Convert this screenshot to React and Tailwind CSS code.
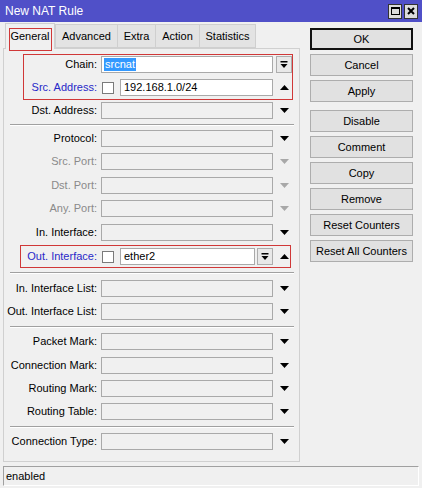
import React from "react";

const Down = ({ gray }) => (
  <svg width="9" height="5" viewBox="0 0 9 5">
    <polygon points="0,0 9,0 4.5,5" fill={gray ? "#a8a8a8" : "#000"} />
  </svg>
);
const Up = () => (
  <svg width="9" height="5" viewBox="0 0 9 5">
    <polygon points="0,5 9,5 4.5,0" fill="#000" />
  </svg>
);
const DropBtn = () => (
  <div className="w-[16px] h-[17px] border border-[#adadad] bg-[#e8e8e8] flex items-center justify-center">
    <svg width="8" height="8" viewBox="0 0 8 8">
      <rect x="0.5" y="0" width="7" height="1.5" fill="#000" />
      <polygon points="0.5,3 7.5,3 4,7" fill="#000" />
    </svg>
  </div>
);

function Row({ label, h = "h-[23px]", color = "text-black", white, checkbox, value, selected, btn, arrow = "down" }) {
  return (
    <div className={`flex items-center ${h}`}>
      <div className={`w-[93px] text-right whitespace-nowrap ${color}`}>{label}</div>
      <div className="ml-[4px] w-[172px] flex items-center">
        {checkbox && (
          <div className="ml-[1px] w-[12px] h-[12px] border border-[#7a7a7a] bg-white mr-[6px] shrink-0" />
        )}
        <div
          className={`flex-1 h-[17px] border border-[#a9a9a9] flex items-center pl-[2px] ${
            white ? "bg-white" : "bg-[#f0f0f0]"
          }`}
        >
          {selected ? (
            <span className="bg-[#3399ff] text-white px-[1px] leading-[13px]">{value}</span>
          ) : (
            <span className="pl-[1px]">{value}</span>
          )}
        </div>
        {btn && (
          <div className="ml-[2px]">
            <DropBtn />
          </div>
        )}
      </div>
      <div className="ml-[2px] w-[18px] flex items-center justify-center">
        {arrow === "up" && <Up />}
        {arrow === "down" && <Down />}
        {arrow === "gray" && <Down gray />}
        {arrow === "btn" && <DropBtn />}
      </div>
    </div>
  );
}

const Sep = ({ h = "h-[7px]" }) => (
  <div className={`${h} flex items-center pl-[6px] pr-[5px]`}>
    <div className="w-full border-t border-[#a0a0a0] border-b border-b-white" />
  </div>
);

const Btn = ({ children, ok, cls = "" }) => (
  <div
    className={`h-[22px] flex items-center justify-center ${
      ok ? "border-2 border-[#111]" : "border border-[#adadad]"
    } bg-[#e1e1e1] ${cls}`}
  >
    {children}
  </div>
);

export default function App() {
  return (
    <div className="w-[422px] h-[488px] bg-[#f0f0f0] font-['Liberation_Sans',Arial,sans-serif] text-[11px] text-black overflow-hidden">
      {/* Title bar */}
      <div className="h-[22px] bg-[#5050c8] flex items-center pl-[5px] pr-[4px]">
        <div className="text-white text-[12px] flex-1">New NAT Rule</div>
        <div className="flex gap-[2px]">
          <div className="w-[14px] h-[15px] bg-[#dcdcdc] border border-[#333] flex items-center justify-center">
            <div className="w-[9px] h-[8px] border border-black border-t-2" />
          </div>
          <div className="w-[14px] h-[15px] bg-[#dcdcdc] border border-[#333] flex items-center justify-center">
            <svg width="8" height="8" viewBox="0 0 8 8">
              <path d="M1 1 L7 7 M7 1 L1 7" stroke="#000" strokeWidth="2" />
            </svg>
          </div>
        </div>
      </div>

      <div className="flex h-[440px]">
        {/* Left column */}
        <div className="ml-[3px] w-[297px] flex flex-col">
          {/* Tabs */}
          <div className="h-[26px] flex items-end pl-[2px]">
            <div className="relative w-[50px] h-[26px] bg-[#f0f0f0] border border-b-0 border-[#d0d0d0] -mb-px z-10 flex items-center justify-center">
              General
              <div className="absolute left-[3px] right-[2px] top-[4px] bottom-[-2px] border border-[#d03838]" />
            </div>
            <div className="w-[63px] h-[24px] bg-[#e3e3e3] border border-[#cfcfcf] flex items-center justify-center">Advanced</div>
            <div className="w-[38px] h-[24px] bg-[#e3e3e3] border border-l-0 border-[#cfcfcf] flex items-center justify-center">Extra</div>
            <div className="w-[44px] h-[24px] bg-[#e3e3e3] border border-l-0 border-[#cfcfcf] flex items-center justify-center">Action</div>
            <div className="w-[56px] h-[24px] bg-[#e3e3e3] border border-l-0 border-[#cfcfcf] flex items-center justify-center">Statistics</div>
          </div>
          {/* Panel */}
          <div className="flex-1 border border-[#d0d0d0] pt-[4px]">
            <div className="relative">
              <Row label="Chain:" white value="srcnat" selected arrow="btn" />
              <Row label="Src. Address:" color="text-[#2828c8]" white checkbox value="192.168.1.0/24" arrow="up" />
              <div className="absolute left-[19px] right-[6px] top-[1px] bottom-[-1px] border border-[#d03838] pointer-events-none" />
            </div>
            <Row label="Dst. Address:" />
            <Sep h="h-[5px]" />
            <Row label="Protocol:" />
            <Row label="Src. Port:" color="text-[#8a8a8a]" arrow="gray" />
            <Row label="Dst. Port:" color="text-[#8a8a8a]" h="h-[24px]" arrow="gray" />
            <Row label="Any. Port:" color="text-[#8a8a8a]" arrow="gray" />
            <Row label="In. Interface:" h="h-[24px]" />
            <div className="relative">
              <Row label="Out. Interface:" color="text-[#2828c8]" h="h-[25px]" white checkbox value="ether2" btn arrow="up" />
              <div className="absolute left-[16px] right-[8px] top-[1px] bottom-[1px] border border-[#d03838] pointer-events-none" />
            </div>
            <Sep />
            <Row label="In. Interface List:" h="h-[24px]" />
            <Row label="Out. Interface List:" />
            <Sep />
            <Row label="Packet Mark:" />
            <Row label="Connection Mark:" h="h-[24px]" />
            <Row label="Routing Mark:" />
            <Row label="Routing Table:" />
            <Sep />
            <Row label="Connection Type:" />
          </div>
        </div>

        {/* Right column */}
        <div className="ml-[10px] w-[103px] pt-[6px] flex flex-col gap-[4px]">
          <Btn ok>OK</Btn>
          <Btn>Cancel</Btn>
          <Btn>Apply</Btn>
          <Btn cls="mt-[4px]">Disable</Btn>
          <Btn>Comment</Btn>
          <Btn>Copy</Btn>
          <Btn>Remove</Btn>
          <Btn>Reset Counters</Btn>
          <Btn>Reset All Counters</Btn>
        </div>
      </div>

      {/* Status bar */}
      <div className="mt-[4px] mx-[3px] h-[20px] border-t border-l border-[#a0a0a0] border-r border-b border-r-white border-b-white flex items-center pl-[2px]">
        enabled
      </div>
    </div>
  );
}
